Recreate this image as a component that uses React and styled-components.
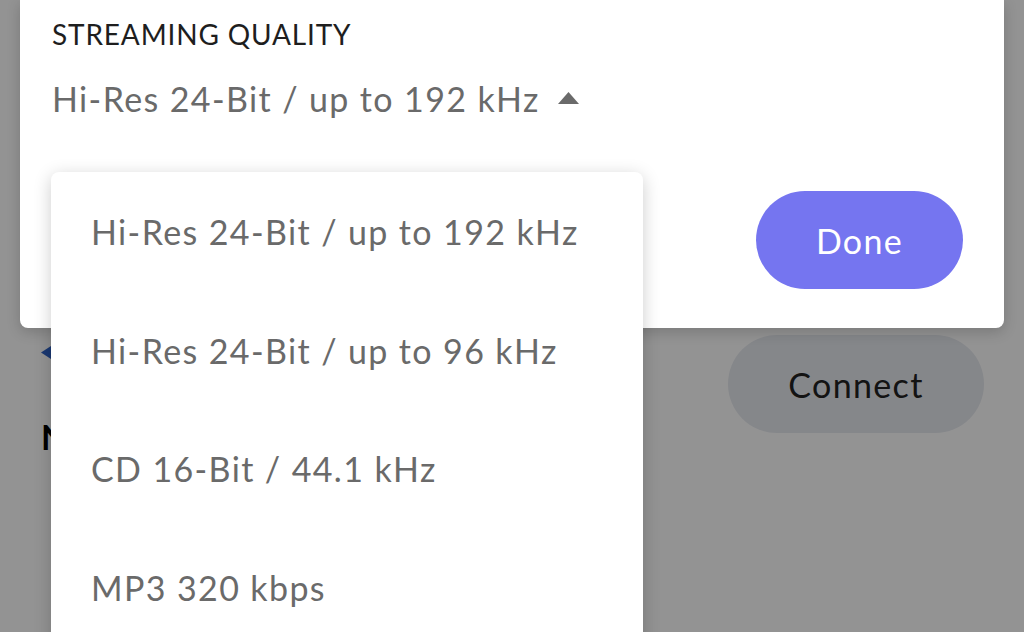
import React from 'react'
import styled, { createGlobalStyle } from 'styled-components';

const options = [
  'Hi-Res 24-Bit / up to 192 kHz',
  'Hi-Res 24-Bit / up to 96 kHz',
  'CD 16-Bit / 44.1 kHz',
  'MP3 320 kbps',
];

function App() {
  return (
    <Screen>
      <GlobalStyle />
      <Page>
        <PageRow>
          <LeftCol>
            <BackArrow width="10" height="13" viewBox="0 0 10 13">
              <path d="M0 6.5 L10 0 L10 13 Z" fill="#2e62c4" />
            </BackArrow>
            <Heading>No</Heading>
          </LeftCol>
          <ConnectButton>Connect</ConnectButton>
        </PageRow>
      </Page>
      <Scrim />
      <Sheet>
        <Label>STREAMING QUALITY</Label>
        <ValueRow>
          <Value>Hi-Res 24-Bit / up to 192 kHz</Value>
          <Caret width="21" height="12" viewBox="0 0 21 12">
            <path d="M10.5 0 L21 12 L0 12 Z" fill="#6a6a6a" />
          </Caret>
        </ValueRow>
        <Footer>
          <DoneButton>Done</DoneButton>
        </Footer>
      </Sheet>
      <Menu>
        {options.map((o) => (
          <MenuItem key={o}>{o}</MenuItem>
        ))}
      </Menu>
    </Screen>
  )
}

export default App;

const GlobalStyle = createGlobalStyle`
  html, body {
    margin: 0;
    padding: 0;
    background: #fff;
    font-family: Lato, "Noto Sans", sans-serif;
  }
`;

const Screen = styled.div`
  position: relative;
  width: 1024px;
  height: 632px;
  overflow: hidden;
  background: #fff;
`;

const Page = styled.div`
  padding: 335px 40px 0 41px;
`;

const PageRow = styled.div`
  display: flex;
  justify-content: space-between;
  align-items: flex-start;
`;

const LeftCol = styled.div`
  display: flex;
  flex-direction: column;
`;

const BackArrow = styled.svg`
  display: block;
  margin-top: 11px;
`;

const Heading = styled.h2`
  margin: 58px 0 0;
  font-size: 34px;
  line-height: 40px;
  font-weight: 700;
  color: #000;
`;

const PillButton = styled.button`
  height: 98px;
  border: none;
  border-radius: 49px;
  font-family: Lato, sans-serif;
  font-size: 34px;
  letter-spacing: 1.35px;
  padding: 0;
`;

const ConnectButton = styled(PillButton)`
  width: 256px;
  background: #e7eaf0;
  color: #222;
`;

const Scrim = styled.div`
  position: absolute;
  inset: 0;
  background: rgba(0, 0, 0, 0.424);
`;

const Sheet = styled.div`
  position: absolute;
  top: 0;
  left: 20px;
  width: 984px;
  box-sizing: border-box;
  padding: 17px 41px 39px 32px;
  background: #fff;
  border-radius: 0 0 8px 8px;
  box-shadow: 0 4px 14px rgba(0, 0, 0, 0.18);
  display: flex;
  flex-direction: column;
`;

const Label = styled.div`
  font-size: 28px;
  line-height: 34px;
  color: #1e1e1e;
  letter-spacing: 0.85px;
`;

const ValueRow = styled.div`
  margin-top: 28px;
  display: flex;
  align-items: center;
  gap: 18px;
`;

const Value = styled.div`
  font-size: 34px;
  line-height: 40px;
  letter-spacing: 1.38px;
  color: #6a6a6a;
`;

const Caret = styled.svg`
  display: block;
  margin-top: -2px;
`;

const Footer = styled.div`
  margin-top: 72px;
  display: flex;
  justify-content: flex-end;
`;

const DoneButton = styled(PillButton)`
  width: 207px;
  background: #7575f0;
  color: #fff;
`;

const Menu = styled.ul`
  position: absolute;
  top: 172px;
  left: 51px;
  width: 592px;
  height: 520px;
  margin: 0;
  padding: 0;
  list-style: none;
  background: #fff;
  border-radius: 8px;
  box-shadow: 0 4px 18px rgba(0, 0, 0, 0.2);
`;

const MenuItem = styled.li`
  height: 118.7px;
  display: flex;
  align-items: center;
  padding-left: 40px;
  font-size: 34px;
  letter-spacing: 1.38px;
  color: #6a6a6a;
`;
